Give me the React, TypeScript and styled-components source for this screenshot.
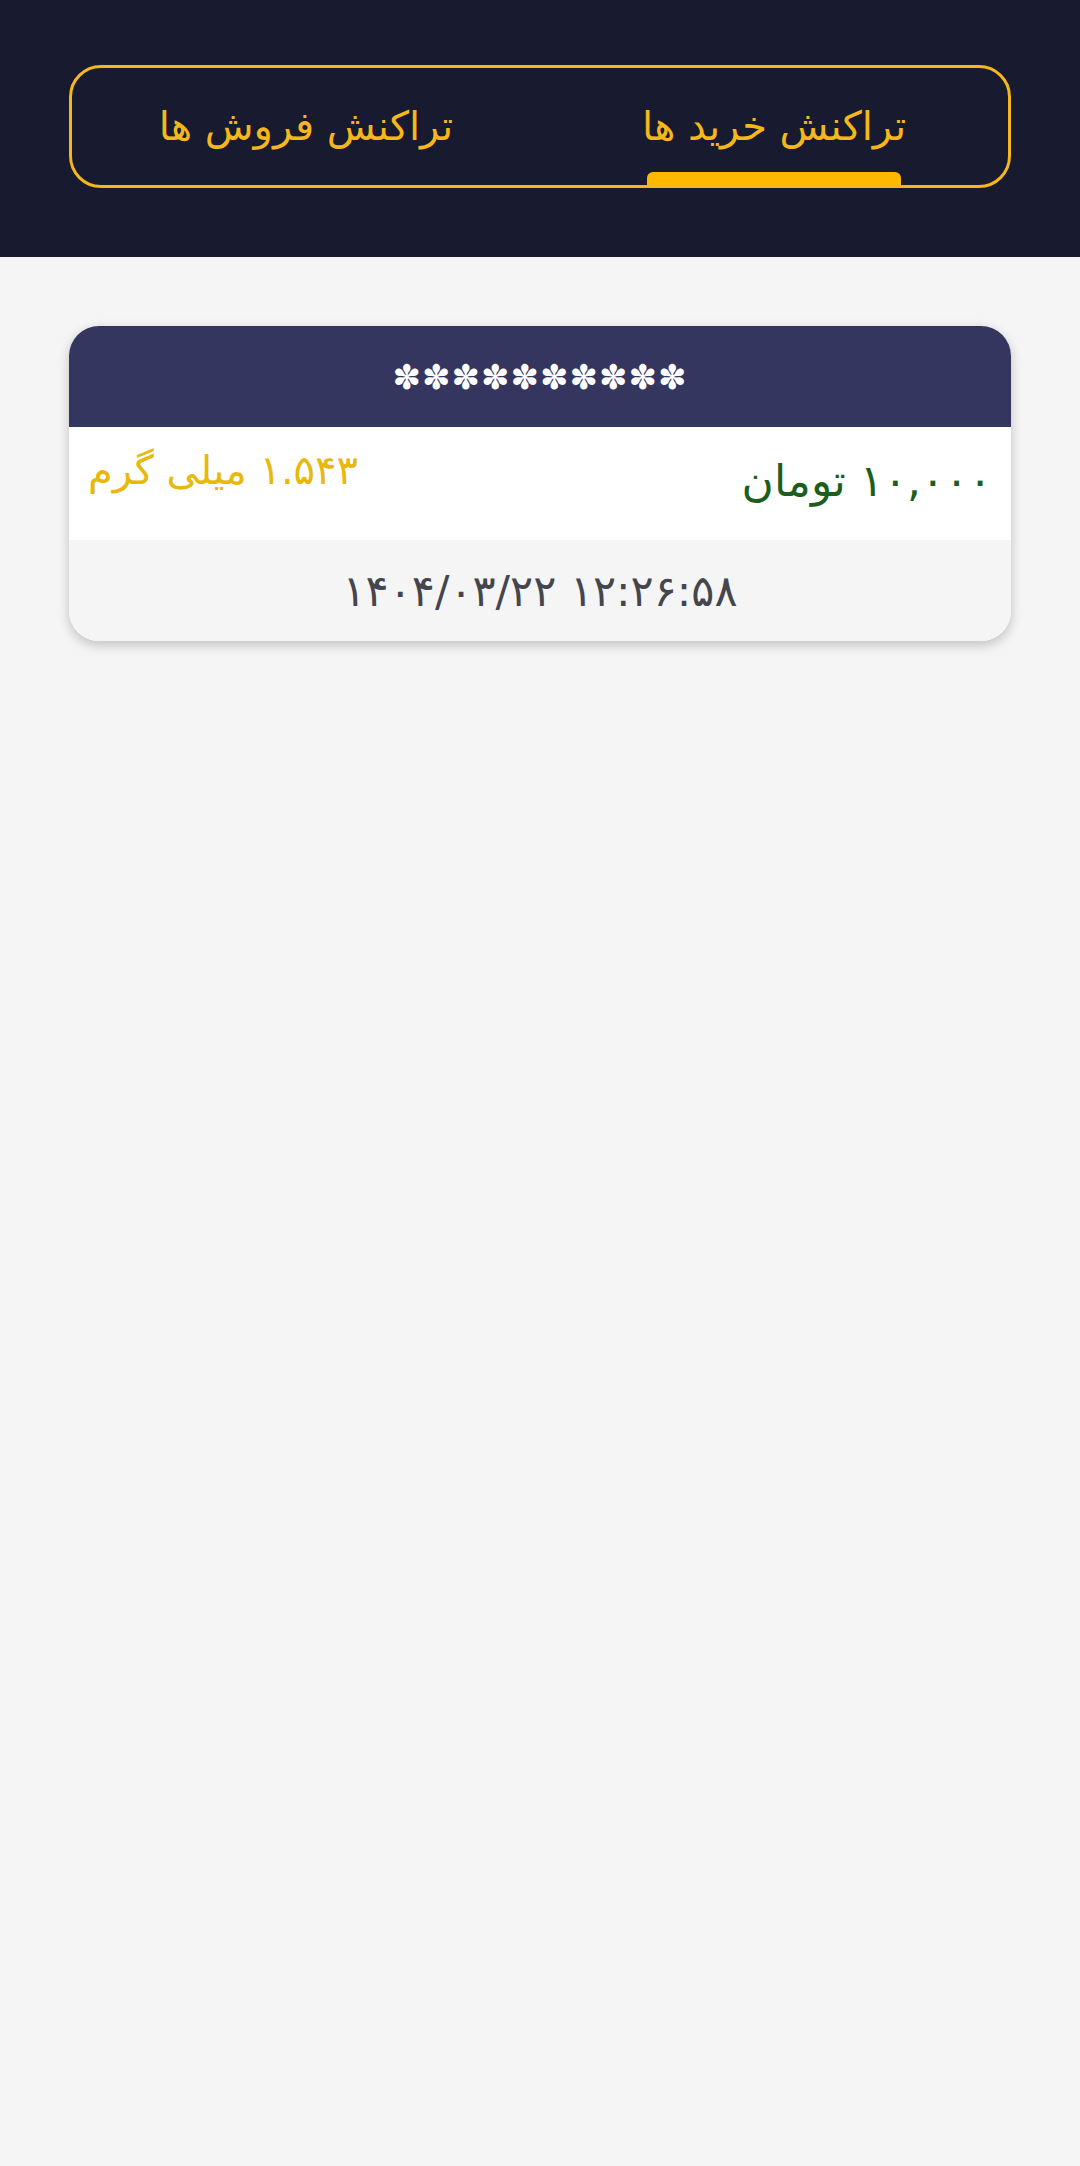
import React, { useState } from 'react'
import styled, { createGlobalStyle } from 'styled-components'

const GlobalStyle = createGlobalStyle`
  html, body {
    margin: 0;
    padding: 0;
    background: #f5f5f5;
    font-family: 'DejaVu Sans', 'Noto Sans', sans-serif;
  }
`

const Page = styled.div`
  min-height: 2166px;
  background: #f5f5f5;
  direction: rtl;
`

const Header = styled.header`
  background: #181a2f;
  height: 257px;
  padding: 65px 69px 0;
  box-sizing: border-box;
`

const TabBox = styled.div`
  display: flex;
  height: 123px;
  border: 3px solid #f5b719;
  border-radius: 32px;
  box-sizing: border-box;
  overflow: hidden;
`

const Tab = styled.button<{ active: boolean }>`
  position: relative;
  flex: 1;
  display: flex;
  align-items: center;
  justify-content: center;
  padding: 0 0 2px;
  background: transparent;
  border: none;
  color: #f5b719;
  font-family: inherit;
  font-size: 40px;
  cursor: pointer;

  &::after {
    content: '';
    display: ${({ active }) => (active ? 'block' : 'none')};
    position: absolute;
    bottom: 0;
    left: 50%;
    transform: translateX(-50%);
    width: 254px;
    height: 13px;
    background: #ffb800;
    border-radius: 6px 6px 0 0;
  }
`

const Content = styled.main`
  padding: 69px 69px 0;
`

const Card = styled.div`
  background: #ffffff;
  border-radius: 30px;
  overflow: hidden;
  box-shadow: 0 4px 12px rgba(0, 0, 0, 0.22);
`

const CardHead = styled.div`
  height: 101px;
  background: #34365f;
  color: #ffffff;
  display: flex;
  align-items: center;
  justify-content: center;
  font-size: 34px;
  letter-spacing: 1px;
`

const AmountRow = styled.div`
  height: 113px;
  display: flex;
  align-items: flex-start;
  justify-content: space-between;
  padding: 20px 19px 0 19px;
  box-sizing: border-box;
  background: #ffffff;
`

const Price = styled.span`
  color: #1b5e20;
  font-size: 44px;
  padding-top: 8px;
`

const Weight = styled.span`
  color: #e8b80c;
  font-size: 40px;
`

const DateRow = styled.div`
  height: 101px;
  display: flex;
  align-items: center;
  justify-content: center;
  background: #f5f5f5;
  color: #45454d;
  font-size: 43px;
`

const DateText = styled.span`
  direction: ltr;
  unicode-bidi: isolate;
`

export default function App() {
  const [tab, setTab] = useState<'buy' | 'sell'>('buy')
  return (
    <Page>
      <GlobalStyle />
      <Header>
        <TabBox>
          <Tab active={tab === 'buy'} onClick={() => setTab('buy')}>
            تراکنش خرید ها
          </Tab>
          <Tab active={tab === 'sell'} onClick={() => setTab('sell')}>
            تراکنش فروش ها
          </Tab>
        </TabBox>
      </Header>
      <Content>
        <Card>
          <CardHead>✽✽✽✽✽✽✽✽✽✽</CardHead>
          <AmountRow>
            <Price>۱۰,۰۰۰ تومان</Price>
            <Weight>۱.۵۴۳ میلی گرم</Weight>
          </AmountRow>
          <DateRow>
            <DateText>۱۴۰۴/۰۳/۲۲ ۱۲:۲۶:۵۸</DateText>
          </DateRow>
        </Card>
      </Content>
    </Page>
  )
}
